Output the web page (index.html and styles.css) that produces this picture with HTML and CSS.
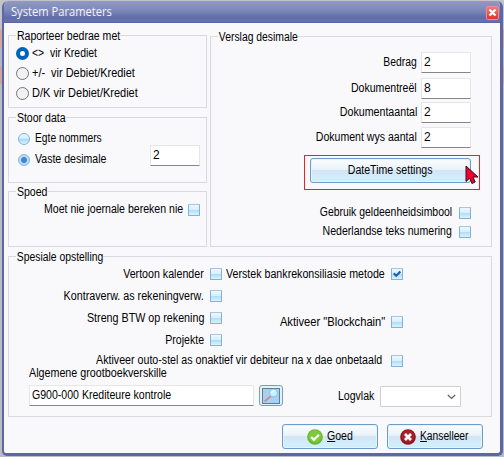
FILE: index.html
```
<!DOCTYPE html>
<html lang="af">
<head>
<meta charset="utf-8">
<title>System Parameters</title>
<link rel="stylesheet" href="styles.css">
</head>
<body>
<main class="window">
  <header class="titlebar">
    <h1>System Parameters</h1>
    <button class="close" aria-label="Close"><svg width="9" height="9" viewBox="0 0 9 9"><path d="M1.5 1.5l6 6M7.5 1.5l-6 6" stroke="#fff" stroke-width="2.3"/></svg></button>
  </header>
  <div class="content">
    <div class="upper">
      <div class="left">
        <section class="group report">
          <h2 class="t-report">Raporteer bedrae met</h2>
          <div class="choice"><i class="radio on"></i><span class="t-cred">&lt;&gt;&nbsp; vir Krediet</span></div>
          <div class="choice"><i class="radio"></i><span class="t-pm">+/-&nbsp; vir Debiet/Krediet</span></div>
          <div class="choice"><i class="radio"></i><span class="t-dk">D/K vir Debiet/Krediet</span></div>
        </section>
        <section class="group store">
          <h2 class="t-store">Stoor data</h2>
          <div class="store-grid">
            <div>
              <div class="option"><i class="orb"></i><span class="t-egte">Egte nommers</span></div>
              <div class="option"><i class="orb picked"></i><span class="t-vaste">Vaste desimale</span></div>
            </div>
            <div class="input num">2</div>
          </div>
        </section>
        <section class="group speed">
          <h2 class="t-spoed">Spoed</h2>
          <div class="check"><span class="t-moet">Moet nie joernale bereken nie</span><i class="box"></i></div>
        </section>
      </div>
      <section class="group decimals">
        <h2 class="t-verslag">Verslag desimale</h2>
        <div class="fields">
          <div class="field"><span class="t-bedrag">Bedrag</span><div class="input num">2</div></div>
          <div class="field"><span class="t-reel">Dokumentreël</span><div class="input num">8</div></div>
          <div class="field"><span class="t-aantal">Dokumentaantal</span><div class="input num">2</div></div>
          <div class="field"><span class="t-wys">Dokument wys aantal</span><div class="input num">2</div></div>
        </div>
        <div class="marked">
          <button class="btn wide"><span class="t-date">DateTime settings</span></button>
          <svg class="cursor" width="14" height="20" viewBox="0 0 14 20"><path d="M1 1v15.5l3.6-3.3 2.3 5.3 3.3-1.5L8 12H13z" fill="#f00030" stroke="#30101c" stroke-width="1"/></svg>
        </div>
        <div class="check c1"><span class="t-gebruik">Gebruik geldeenheidsimbool</span><i class="box"></i></div>
        <div class="check c2"><span class="t-neder">Nederlandse teks numering</span><i class="box"></i></div>
      </section>
    </div>
    <section class="group special">
      <h2 class="t-spes">Spesiale opstelling</h2>
      <div class="columns">
        <div class="col-a">
          <div class="check"><span class="t-vertoon">Vertoon kalender</span><i class="box"></i></div>
          <div class="check"><span class="t-kontra">Kontraverw. as rekeningverw.</span><i class="box"></i></div>
          <div class="check"><span class="t-streng">Streng BTW op rekening</span><i class="box"></i></div>
          <div class="check"><span class="t-proj">Projekte</span><i class="box"></i></div>
        </div>
        <div class="col-b">
          <div class="check"><span class="t-verstek">Verstek bankrekonsiliasie metode</span><i class="box"><svg width="8" height="8" viewBox="0 0 8 8"><path d="M.7 3.2l2.5 2.5L7.3 1.6" fill="none" stroke="#1d5fa8" stroke-width="2.1"/></svg></i></div>
          <div class="check"><span class="t-block">Aktiveer "Blockchain"</span><i class="box"></i></div>
        </div>
      </div>
      <div class="check auto"><span class="t-outo">Aktiveer outo-stel as onaktief vir debiteur na x dae onbetaald</span><i class="box"></i></div>
      <div class="ledger-label"><span class="t-alg">Algemene grootboekverskille</span></div>
      <div class="ledger">
        <div class="input account"><span class="t-g900">G900-000 Krediteure kontrole</span></div>
        <button class="search" aria-label="Soek"><svg width="18" height="16" viewBox="0 0 18 16"><rect x=".5" y=".5" width="17" height="15" fill="#aacff0" stroke="#111" stroke-dasharray="1 1"/><path d="M2.5 13.5L9 8" stroke="#cf8c99" stroke-width="2"/><circle cx="11.5" cy="5" r="4" fill="#c9f1fd" stroke="#80c3e8"/><path d="M9.5 4.5q1-2 3-1.5" stroke="#fff" fill="none"/></svg></button>
        <div class="log"><span class="t-log">Logvlak</span></div>
        <div class="combo"><svg width="9" height="6" viewBox="0 0 9 6"><path d="M.8 1l3.7 3.5L8.2 1" fill="none" stroke="#606060" stroke-width="1.2"/></svg></div>
      </div>
    </section>
    <footer class="actions">
      <button class="btn ok"><svg width="16" height="16" viewBox="0 0 16 16"><circle cx="8" cy="8" r="7.8" fill="#69b52b"/><circle cx="8" cy="7.3" r="6.4" fill="#7cc93b"/><path d="M4.2 8l2.7 2.7 5-5" fill="none" stroke="#fff" stroke-width="2.3"/></svg><span class="t-goed"><u>G</u>oed</span></button>
      <button class="btn cancel"><svg width="16" height="16" viewBox="0 0 16 16"><circle cx="8" cy="8" r="7.8" fill="#93121b"/><circle cx="8" cy="7.3" r="6.4" fill="#a82029"/><path d="M5 5l6 6M11 5l-6 6" stroke="#fff" stroke-width="2.8"/></svg><span class="t-kans"><u>K</u>anselleer</span></button>
    </footer>
  </div>
</main>
</body>
</html>
```
FILE: styles.css
```
* { box-sizing: border-box; }
body {
  margin: 0;
  width: 504px;
  height: 457px;
  overflow: hidden;
  padding: 1px 1px 1px 2px;
  background: linear-gradient(#c4c4c8 0 29px, #d0a8a0 30px 47px, #b4b4cc 48px 66px, #cba59f 67px 83px, #b9bbc6 85px);
  font: 12px/14px "Liberation Sans", Arial, sans-serif;
  color: #000;
}
h1, h2 { margin: 0; font-weight: normal; }
button { padding: 0; margin: 0; font: inherit; color: inherit; }

/* Condensed labels; --w is the horizontal scale of one label */
span, h2 {
  --w: .88;
  display: inline-block;
  white-space: nowrap;
  transform: scaleX(var(--w));
  transform-origin: 0 50%;
}
.check span, .field > span, .log span { transform-origin: 100% 50%; }
.t-cred { --w: .87; }
.t-pm { --w: .91; }
.t-dk { --w: .917; }
.t-egte { --w: .855; }
.t-verslag, .t-bedrag, .t-spes { --w: .863; }
.t-aantal, .t-vertoon, .t-verstek, .t-outo { --w: .888; }
.t-gebruik { --w: .87; }
.t-kontra, .t-streng, .t-alg { --w: .894; }
.t-block { --w: .93; }
.t-kans { --w: .855; }
.t-date { transform-origin: 50% 50%; }

svg { display: block; flex: none; }
.window {
  width: 501px;
  height: 455px;
  border: solid #5b68a5;
  border-width: 0 3px 3px 2px;
  border-radius: 6px 6px 5px 5px;
  background: #f9f9fc;
  overflow: hidden;
}
.titlebar {
  height: 22px;
  margin: 0 -3px 0 -2px;
  padding: 1px 4px 0 9px;
  display: flex;
  align-items: center;
  justify-content: space-between;
  background: linear-gradient(#8f99c2, #7f8aba 40%, #626ca9 75%, #6872ae 92%, #5262a0);
}
.titlebar h1 {
  margin-top: -2px;
  font: 12px/16px "Open Sans", sans-serif;
  color: #f4f5fa;
  transform: scaleX(.93);
  transform-origin: 0 50%;
}
.close {
  width: 13px;
  height: 14px;
  display: grid;
  place-items: center;
  border: 1px solid #f28b8b;
  border-radius: 2px;
  background: linear-gradient(#f07a76, #dc3436);
}
.content { padding: 12px 8px 0 4px; }
.upper { display: flex; gap: 3px; }
.left { width: 199px; display: flex; flex-direction: column; }
.group { border: 1px solid #dadade; }
.group h2 {
  display: block;
  width: max-content;
  height: 14px;
  margin: -7px 0 0 7px;
  padding: 0 0 0 1px;
  background: #f9f9fc;
  font-size: 12px;
}
.report { height: 73px; }
.store { height: 66px; margin-top: 9px; }
.speed { height: 56px; margin-top: 8px; }
.decimals { width: 282px; height: 211px; margin-top: 1px; }
.choice { height: 20px; display: flex; align-items: center; padding-left: 7px; gap: 3px; }
.radio { width: 13px; height: 13px; border: 1px solid #767676; border-radius: 50%; background: #f1f1f3; }
.radio.on { border: 4px solid #0062b8; background: #fff; }
.store-grid { display: flex; justify-content: space-between; padding: 3px 6px 0 9px; }
.option { height: 21px; display: flex; align-items: center; gap: 5px; }
.option span { margin-top: -1px; }
.orb { width: 12px; height: 12px; border: 1px solid #83b3dc; border-radius: 50%; background: linear-gradient(#eef7fe, #cdeafd 50%, #a9dafa 55%, #d9f4ff); }
.orb.picked { background: radial-gradient(circle, #3e86c8 0 2.4px, #b9defa 3.6px); }
.input { height: 21px; border: 1px solid #e6e6e9; border-bottom-color: #868686; border-radius: 1px; background: #fff; padding: 2px 0 0 2px; }
.num { width: 50px; }
.store .num { margin-top: 17px; }
.check { display: flex; align-items: center; justify-content: flex-end; gap: 5px; height: 14px; }
.check span { margin-top: -2px; }
.columns .check span { margin-top: 0; }
.box {
  width: 12px;
  height: 12px;
  flex: none;
  display: grid;
  place-items: center;
  border: 1px solid #83b1d8;
  border-top-color: #a7c6e1;
  border-radius: 1px;
  background: linear-gradient(#f0f8fe, #d9effd 45%, #b3ddfa 55%, #d8f5ff);
}
.speed .check { padding-right: 6px; margin-top: 4px; }
.decimals .check { padding-right: 20px; gap: 7px; }
.fields { padding: 8px 20px 0 0; display: grid; grid-template-rows: 26px 24px 25px 21px; }
.field { display: flex; justify-content: flex-end; gap: 4px; }
.field > span { margin-top: 3px; }
.marked { position: relative; width: 176px; height: 35px; margin: 7px 0 0 93px; border: 1px solid #f02027; padding: 2px 0 0 5px; }
.cursor { position: absolute; left: 160px; top: 9px; }
.btn {
  width: 96px;
  height: 25px;
  display: flex;
  align-items: center;
  gap: 4px;
  border: 1px solid #6d9cca;
  border-radius: 3px;
  box-shadow: inset 0 0 0 1px #e6f5fd;
  background: linear-gradient(#fafdff, #eaf3fa 45%, #d0e5f5 50%, #d5ecfa 80%, #c6f1fe);
}
.btn.wide { width: 161px; justify-content: center; padding-bottom: 2px; }
.btn.ok { padding-left: 24px; }
.btn.cancel { padding-left: 12px; }
.btn.ok span, .btn.cancel span { margin-top: -2px; }
.c1 { margin-top: 16px; }
.c2 { margin-top: 5px; }
.special { height: 161px; margin-top: 9px; }
.columns { display: flex; }
.col-a { width: 213px; margin-top: 3px; display: grid; row-gap: 8px; }
.col-b { width: 181px; margin-top: 3px; display: flex; flex-direction: column; }
.col-b .check + .check { margin-top: 34px; }
.col-a .check, .col-b .check { gap: 6px; }
.check.auto { width: 394px; margin-top: 7px; gap: 9px; }
.ledger-label { padding-left: 20px; height: 14px; margin-top: -2px; }
.ledger { display: flex; margin-top: 4px; padding-left: 20px; }
.account { width: 225px; margin-top: 1px; }
.search {
  width: 24px;
  height: 21px;
  margin: 1px 0 0 5px;
  display: grid;
  place-items: center;
  border: 1px solid #719fcb;
  border-radius: 3px;
  background: #e2f2fd;
}
.log { width: 91px; text-align: right; margin-top: 5px; }
.combo { width: 81px; height: 21px; margin: 2px 0 0 6px; border: 1px solid #cfcfcf; border-radius: 1px; background: #fff; display: flex; align-items: center; justify-content: flex-end; padding-right: 4px; }
.actions { display: flex; justify-content: flex-end; gap: 9px; padding-right: 9px; margin-top: 7px; }
```
